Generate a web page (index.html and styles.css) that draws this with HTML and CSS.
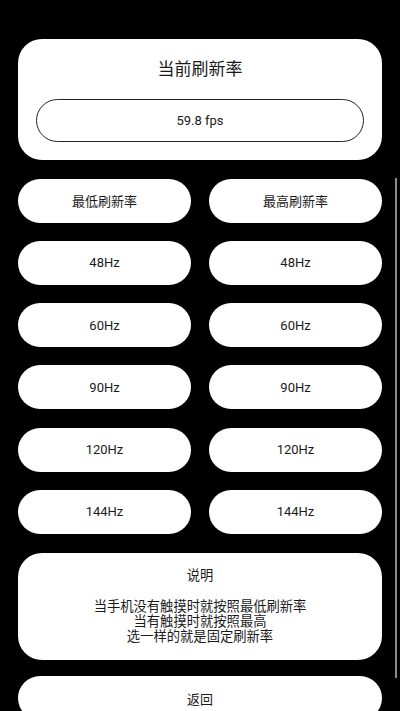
FILE: index.html
```html
<!DOCTYPE html>
<html lang="zh-CN">
<head>
    <meta charset="UTF-8">
    <meta name="viewport" content="width=device-width, initial-scale=1.0">
    <title>刷新率</title>
    <link rel="stylesheet" href="styles.css">
</head>
<body>
    <div class="page">
        <div class="current-card">
            <h2 class="current-title">当前刷新率</h2>
            <div class="fps-pill">59.8 fps</div>
        </div>

        <div class="rate-grid">
            <button class="rate-btn">最低刷新率</button>
            <button class="rate-btn">最高刷新率</button>
            <button class="rate-btn">48Hz</button>
            <button class="rate-btn">48Hz</button>
            <button class="rate-btn">60Hz</button>
            <button class="rate-btn">60Hz</button>
            <button class="rate-btn">90Hz</button>
            <button class="rate-btn">90Hz</button>
            <button class="rate-btn">120Hz</button>
            <button class="rate-btn">120Hz</button>
            <button class="rate-btn">144Hz</button>
            <button class="rate-btn">144Hz</button>
        </div>

        <div class="info-card">说明

当手机没有触摸时就按照最低刷新率
当有触摸时就按照最高
选一样的就是固定刷新率</div>

        <button class="back-btn">返回</button>
    </div>
    <!-- scroll indicator -->
    <div class="scrollbar"></div>
</body>
</html>
```

FILE: styles.css
```css
html, body {
    margin: 0;
    padding: 0;
    background: #000;
}
body {
    font-family: Roboto, "Noto Sans CJK SC", sans-serif;
    color: #1a1a1a;
    height: 711px;
    overflow: hidden;
    position: relative;
}
.page {
    padding: 39px 18px 0;
}
.current-card {
    background: #fff;
    border-radius: 24px;
    padding: 20px 18px 18px;
}
.current-title {
    margin: 0 0 20px;
    font-size: 17px;
    font-weight: normal;
    line-height: 20px;
    text-align: center;
}
.fps-pill {
    height: 41px;
    border: 1px solid #222;
    border-radius: 22px;
    display: flex;
    align-items: center;
    justify-content: center;
    font-size: 13px;
}
.rate-grid {
    display: grid;
    grid-template-columns: 1fr 1fr;
    column-gap: 18px;
    row-gap: 18.25px;
    margin-top: 18.5px;
}
.rate-btn, .back-btn {
    height: 44px;
    border: none;
    border-radius: 22px;
    background: #fff;
    color: #1a1a1a;
    font-family: inherit;
    font-size: 13px;
    padding: 0;
}
.info-card {
    margin-top: 19.5px;
    background: #fff;
    border-radius: 24px;
    padding: 15px 10px 15px;
    font-size: 13.3px;
    line-height: 15.25px;
    text-align: center;
    white-space: pre-line;
}
.back-btn {
    display: block;
    width: 100%;
    margin-top: 16.5px;
}
.scrollbar {
    position: absolute;
    left: 395px;
    top: 178px;
    width: 2px;
    height: 500px;
    background: #8a8a8a;
}
```
